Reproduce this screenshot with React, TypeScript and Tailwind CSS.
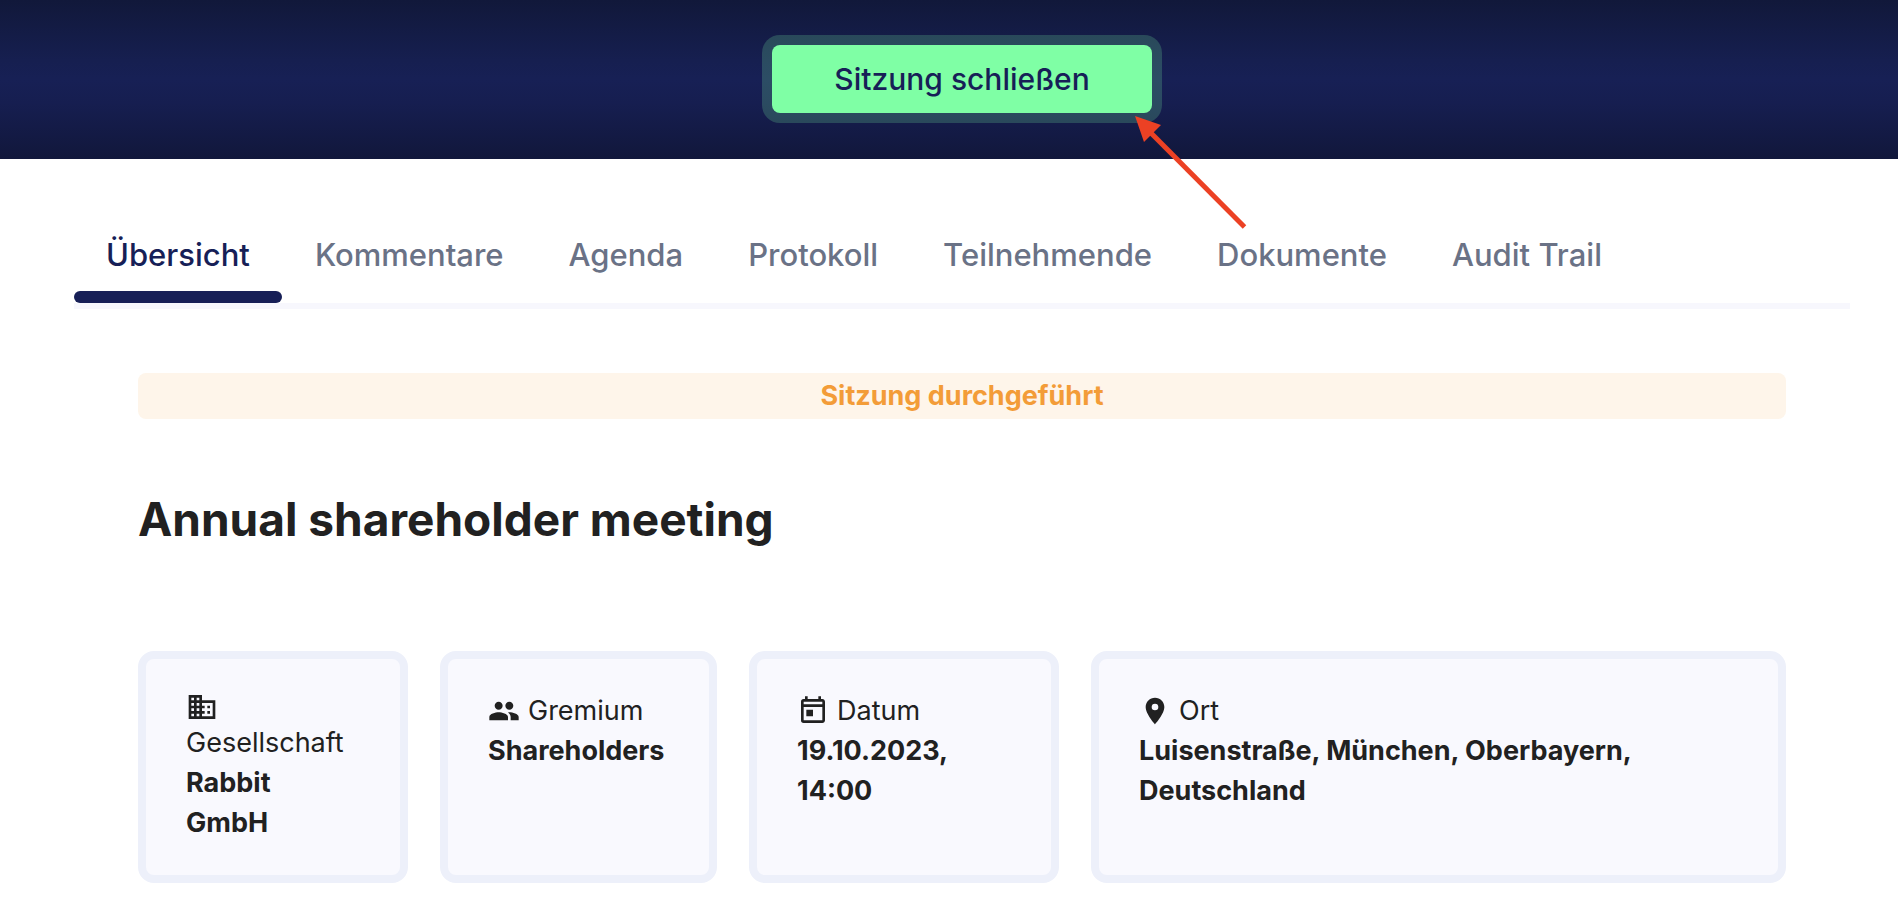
import type { IconType } from 'react-icons';
import { MdBusiness, MdOutlineToday, MdPeople, MdPlace } from 'react-icons/md';

interface InfoCardProps {
  icon: IconType;
  label: string;
  value: string;
}

const tabs = [
  'Übersicht',
  'Kommentare',
  'Agenda',
  'Protokoll',
  'Teilnehmende',
  'Dokumente',
  'Audit Trail'
];

const details: InfoCardProps[] = [
  { icon: MdBusiness, label: 'Gesellschaft', value: 'Rabbit\nGmbH' },
  { icon: MdPeople, label: 'Gremium', value: 'Shareholders' },
  { icon: MdOutlineToday, label: 'Datum', value: '19.10.2023, 14:00' },
  {
    icon: MdPlace,
    label: 'Ort',
    value: 'Luisenstraße, München, Oberbayern, Deutschland'
  }
];

function Arrow() {
  return (
    <svg
      className="absolute left-[363px] top-[71px] pointer-events-none"
      width="114"
      height="116"
      viewBox="0 0 114 116"
      aria-hidden="true"
    >
      <path d="M15 16L109.5 111" stroke="#ec4124" strokeWidth="5" />
      <path d="M0 0L26 9L9 26Z" fill="#ec4124" />
    </svg>
  );
}

function InfoCard({ icon: Icon, label, value }: InfoCardProps) {
  return (
    <div className="rounded-2xl border-8 border-[#edf0fa] bg-[#f9f9fe] px-10 py-8 text-[27px] leading-10">
      <dt className="flex flex-wrap items-center gap-x-2">
        <Icon className="size-8 shrink-0" />
        {label}
      </dt>
      <dd className="font-bold whitespace-pre-line">{value}</dd>
    </div>
  );
}

export default function App() {
  return (
    <div className="bg-white font-[Inter,sans-serif] text-[#212121]">
      <header className="flex justify-center bg-[linear-gradient(#11183a,#161f50_38%,#172055_50%,#161e50_65%,#11173b)] pt-[45px] pb-[46px] pl-[74px] pr-12">
        <div className="relative z-10">
          <button
            type="button"
            className="h-[68px] rounded-lg bg-[#7fffa5] px-[62px] text-[30px] font-medium text-[#171f57] ring-10 ring-[#7fffa5]/20"
          >
            Sitzung schließen
          </button>
          <Arrow />
        </div>
      </header>

      <main className="pt-16 pb-7 pl-[74px] pr-12">
        <nav className="flex gap-px border-b-6 border-[#f7f7fd]">
          {tabs.map((tab, index) => (
            <a
              key={tab}
              href="#"
              className={
                index === 0
                  ? 'flex flex-col text-[#171f57]'
                  : 'flex flex-col text-[#6a7286]'
              }
            >
              <span className="px-8 pt-3 pb-4 text-[31px] leading-10 font-medium">
                {tab}
              </span>
              {index === 0 && (
                <span className="h-3 rounded-full bg-[#171f57]" />
              )}
            </a>
          ))}
        </nav>

        <div className="px-16 pt-16">
          <p className="rounded-lg bg-[#fef5ea] text-center text-[27px] leading-[46px] font-bold text-[#f39c38]">
            Sitzung durchgeführt
          </p>

          <h1 className="mt-17 text-[46px] leading-16 font-bold">
            Annual shareholder meeting
          </h1>

          <dl className="mt-25 grid grid-cols-[270fr_277fr_310fr_695fr] gap-8">
            {details.map((detail) => (
              <InfoCard key={detail.label} {...detail} />
            ))}
          </dl>
        </div>
      </main>
    </div>
  );
}
